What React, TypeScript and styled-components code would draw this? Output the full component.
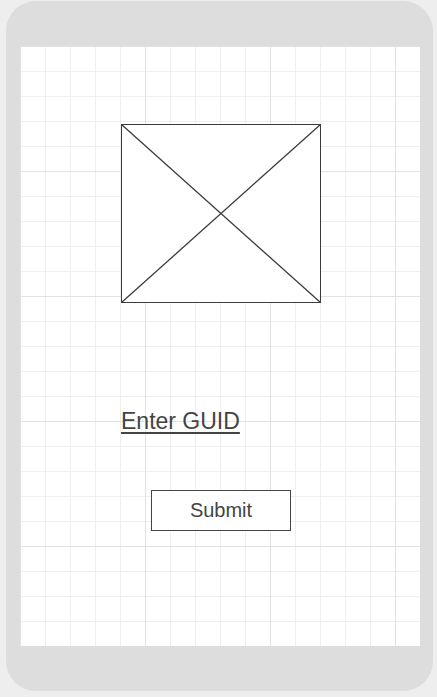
import React from "react";
import styled, { createGlobalStyle } from "styled-components";

const Global = createGlobalStyle`
  html, body { margin: 0; padding: 0; background: #eeeeee; }
  body { font-family: "Liberation Sans", Arial, sans-serif; }
`;

const Page = styled.div`
  width: 437px;
  height: 697px;
  padding: 1px 4px 0 6px;
  box-sizing: border-box;
`;

const Phone = styled.div`
  width: 427px;
  height: 690px;
  box-sizing: border-box;
  background: #dddddd;
  border-radius: 30px;
  padding: 45px 13px 45px 14px;
`;

const Screen = styled.div`
  width: 400px;
  height: 600px;
  background-color: #ffffff;
  background-image:
    linear-gradient(to right, #e2e2e2 1px, transparent 1px),
    linear-gradient(to bottom, #e2e2e2 1px, transparent 1px),
    linear-gradient(to right, #efefef 1px, transparent 1px),
    linear-gradient(to bottom, #efefef 1px, transparent 1px);
  background-size: 125px 125px, 125px 125px, 25px 25px, 25px 25px;
  background-position: 0 0;
  display: flex;
  flex-direction: column;
  align-items: flex-start;
  padding: 78px 0 0 101px;
  box-sizing: border-box;
`;

const ImagePlaceholder = styled.svg`
  display: block;
  width: 200px;
  height: 179px;
  flex: none;
`;

const GuidLink = styled.a`
  margin-top: 105px;
  font-size: 23px;
  line-height: 26px;
  color: #444444;
  text-decoration: underline;
  text-underline-offset: 3px;
  cursor: pointer;
`;

const SubmitButton = styled.button`
  margin: 56px 0 0 30px;
  width: 140px;
  height: 41px;
  border: 1px solid #444444;
  background: #ffffff;
  font-family: "Liberation Sans", Arial, sans-serif;
  font-size: 20px;
  color: #444444;
  display: flex;
  align-items: center;
  justify-content: center;
  padding: 0;
  box-sizing: border-box;
`;

export default function App() {
  return (
    <>
      <Global />
      <Page>
        <Phone>
          <Screen>
            <ImagePlaceholder viewBox="0 0 200 179">
              <rect x="0.5" y="0.5" width="199" height="178" fill="#ffffff" stroke="#3c3c3c" strokeWidth="1" />
              <line x1="0.5" y1="0.5" x2="199.5" y2="178.5" stroke="#3c3c3c" strokeWidth="1.3" />
              <line x1="199.5" y1="0.5" x2="0.5" y2="178.5" stroke="#3c3c3c" strokeWidth="1.3" />
            </ImagePlaceholder>
            <GuidLink>Enter GUID</GuidLink>
            <SubmitButton>Submit</SubmitButton>
          </Screen>
        </Phone>
      </Page>
    </>
  );
}
